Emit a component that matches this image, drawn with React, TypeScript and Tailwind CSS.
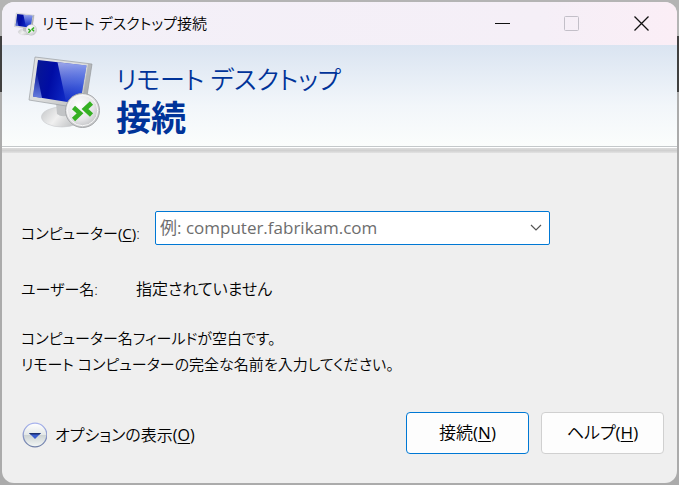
import { useState } from "react";

const MonitorIcon = ({ className }: { className?: string }) => (
  <svg viewBox="0 0 76 74" className={className} aria-hidden="true">
    <defs>
      <linearGradient id="frame" x1="0" y1="0" x2="1" y2="1">
        <stop offset="0" stopColor="#e0e1e2" />
        <stop offset="0.5" stopColor="#dcdddd" />
        <stop offset="1" stopColor="#b0b2b4" />
      </linearGradient>
      <linearGradient id="screen" x1="0" y1="0" x2="1" y2="0.2">
        <stop offset="0" stopColor="#0a1a90" />
        <stop offset="0.4" stopColor="#000ca4" />
        <stop offset="0.7" stopColor="#0c24c0" />
        <stop offset="1" stopColor="#1c3cd0" />
      </linearGradient>
      <linearGradient id="shine" x1="0.5" y1="0" x2="0.6" y2="1">
        <stop offset="0" stopColor="#d4dcff" stopOpacity="0.7" />
        <stop offset="0.5" stopColor="#7c94ec" stopOpacity="0.5" />
        <stop offset="1" stopColor="#2040d0" stopOpacity="0.15" />
      </linearGradient>
      <linearGradient id="glow" x1="0" y1="0" x2="0" y2="1">
        <stop offset="0" stopColor="#8098f0" stopOpacity="0" />
        <stop offset="1" stopColor="#8098f0" stopOpacity="0.8" />
      </linearGradient>
      <linearGradient id="stand" x1="0" y1="0" x2="1" y2="0.4">
        <stop offset="0" stopColor="#c4c6c8" />
        <stop offset="0.5" stopColor="#f0f0f0" />
        <stop offset="1" stopColor="#c0c2c4" />
      </linearGradient>
      <radialGradient id="badge" cx="0.4" cy="0.35" r="0.7">
        <stop offset="0" stopColor="#ffffff" />
        <stop offset="0.6" stopColor="#e6e6e8" />
        <stop offset="1" stopColor="#bcbec0" />
      </radialGradient>
    </defs>
    <ellipse cx="34" cy="62" rx="20.500" ry="10" fill="url(#stand)" stroke="#c8cacc" strokeWidth="0.6" />
    <path d="M28 48 L43 51 L41 60 Q34 63 29 59 Z" fill="#c2c4c6" />
    <path d="M7 2 L64 9 L57 54 L1 45 Z" fill="url(#frame)" stroke="#9a9ea2" strokeWidth="0.7" />
    <path d="M60 9 L64 9 L57 54 L53 53 Z" fill="#94989c" opacity="0.5" />
    <path d="M10 5 L58.500 10.500 L52 49 L5 41.500 Z" fill="url(#screen)" />
    <path d="M29.500 7.200 L58.500 10.500 L52 49 L38 46.800 Z" fill="url(#shine)" />
    <path d="M8.500 16 L14 43 L5 41.500 Z" fill="url(#glow)" />
    <circle cx="54.500" cy="55.500" r="17" fill="url(#badge)" stroke="#a6a8aa" strokeWidth="1" />
    <circle cx="54.500" cy="55.500" r="15.200" fill="none" stroke="#f8f8f8" strokeWidth="1" />
    <path d="M45.500 52.500 L52 58.300 L45.500 64.500" fill="none" stroke="#35b022" strokeWidth="4.600" />
    <path d="M63.500 48 L57 54 L63.500 60" fill="none" stroke="#35b022" strokeWidth="4.600" />
  </svg>
);

const Key = ({ children }: { children: string }) => (
  <span className="font-normal">
    (<span className="underline decoration-1 underline-offset-2">{children}</span>)
  </span>
);

const TitleBar = () => (
  <header className="flex h-[43px] shrink-0 items-center bg-linear-to-r from-[#f3f0f8] via-[#f5eff7] via-80% to-[#fbeef6] pl-3">
    <MonitorIcon className="size-6" />
    <h1 className="ml-1 flex-1 text-[15px]">リモート デスクトップ接続</h1>
    <button type="button" aria-label="最小化" className="flex h-full w-[69px] items-center justify-center">
      <svg viewBox="0 0 15 15" className="size-[15px]">
        <path d="M0 7.500 H15" stroke="#111" />
      </svg>
    </button>
    <button type="button" disabled aria-label="最大化" className="flex h-full w-[69px] items-center justify-center">
      <svg viewBox="0 0 15 15" className="size-[15px]">
        <rect x="0.500" y="0.500" width="14" height="14" rx="1" fill="none" stroke="#c3bfc8" />
      </svg>
    </button>
    <button type="button" aria-label="閉じる" className="flex h-full w-[71px] items-center justify-center">
      <svg viewBox="0 0 15 15" className="size-[15px]">
        <path d="M0.500 0.500 L14.500 14.500 M14.500 0.500 L0.500 14.500" stroke="#111" strokeWidth="1.300" />
      </svg>
    </button>
  </header>
);

const Banner = () => (
  <div className="shrink-0">
    <div className="flex h-[102px] items-start border-b border-[#c4c8ca] bg-linear-to-b from-[#dae4f1] via-[#f2f6fa] via-60% to-[#fbfdfc] pt-[10px] pl-[26px]">
      <MonitorIcon className="h-[74px] w-[76px]" />
      <div className="ml-3 pt-[6px] text-[#003399]">
        <p className="text-[25px] leading-9">リモート デスクトップ</p>
        <p className="text-[35px] leading-[42px] font-bold">接続</p>
      </div>
    </div>
    <div className="h-[6px] border-t border-white bg-linear-to-b from-[#dcdcdc] via-[#d0d0d0] to-[#e2e2e2]" />
  </div>
);

const App = () => {
  const [computer, setComputer] = useState("");

  return (
    <div
      lang="ja"
      className="flex min-h-screen bg-[linear-gradient(#b4b4b4_36px,#404040_36px,#404040_92px,#ababab_92px)] p-[2px] font-['Open_Sans','Noto_Sans_CJK_JP',sans-serif] text-[15px] font-[350] text-black [font-feature-settings:'palt']"
    >
      <div className="flex flex-1 flex-col overflow-hidden rounded-xl bg-[#efefef]">
        <TitleBar />
        <Banner />
        <form className="flex flex-1 flex-col pt-[58px] pr-[13px] pb-[29px] pl-[19px]" onSubmit={(e) => e.preventDefault()}>
          <div className="flex items-end">
            <label htmlFor="computer" className="w-[134px] shrink-0 leading-6 whitespace-nowrap">
              コンピューター
              <Key>C</Key>:
            </label>
            <div className="flex h-[34px] max-w-[395px] flex-1 items-center rounded-xs border border-[#0078d4] bg-white">
              <input
                id="computer"
                type="text"
                role="combobox"
                aria-expanded={false}
                value={computer}
                onChange={(e) => setComputer(e.target.value)}
                placeholder="例: computer.fabrikam.com"
                className="min-w-0 flex-1 pl-1 text-[17px] font-normal outline-none placeholder:text-[#6d6d6d]"
              />
              <button type="button" aria-label="一覧を開く" className="flex h-full w-[27px] items-center justify-center">
                <svg viewBox="0 0 12 8" className="h-2 w-3">
                  <path d="M1 1 L6 6 L11 1" fill="none" stroke="#555" strokeWidth="1.200" />
                </svg>
              </button>
            </div>
          </div>

          <dl className="mt-8 flex items-baseline leading-6">
            <dt className="w-[115px] shrink-0">ユーザー名:</dt>
            <dd className="text-[16px]">指定されていません</dd>
          </dl>

          <p className="mt-6 leading-[26px]">
            コンピューター名フィールドが空白です。
            <br />
            リモート コンピューターの完全な名前を入力してください。
          </p>

          <div className="mt-auto flex items-center">
            <button type="button" className="mt-1 flex items-center gap-2 text-[16px]">
              <svg viewBox="0 0 26 26" className="size-[26px]" aria-hidden="true">
                <defs>
                  <linearGradient id="knob" x1="0" y1="0" x2="0" y2="1">
                    <stop offset="0" stopColor="#ffffff" />
                    <stop offset="0.48" stopColor="#e4e8e8" />
                    <stop offset="0.52" stopColor="#cdd3d4" />
                    <stop offset="1" stopColor="#f4f8f6" />
                  </linearGradient>
                  <linearGradient id="ring" x1="0" y1="0" x2="0" y2="1">
                    <stop offset="0" stopColor="#a9b4ee" />
                    <stop offset="1" stopColor="#6f7fa6" />
                  </linearGradient>
                </defs>
                <circle cx="14" cy="13" r="11.800" fill="url(#knob)" stroke="url(#ring)" strokeWidth="1.300" />
                <path d="M8 11 H20 L14 17 Z" fill="#3a5fd0" />
                <path d="M8 11 H20 L18.500 12.500 H9.500 Z" fill="#1b2f6e" />
              </svg>
              <span>
                オプションの表示
                <Key>O</Key>
              </span>
            </button>
            <div className="ml-auto flex gap-3 text-[17px]">
              <button type="submit" className="h-[42px] w-[123px] rounded-sm border border-[#0078d4] bg-[#fdfdfd]">
                接続
                <Key>N</Key>
              </button>
              <button type="button" className="h-[42px] w-[123px] rounded-sm border border-[#d0d0d0] bg-[#fdfdfd]">
                ヘルプ
                <Key>H</Key>
              </button>
            </div>
          </div>
        </form>
      </div>
    </div>
  );
};

export default App;
